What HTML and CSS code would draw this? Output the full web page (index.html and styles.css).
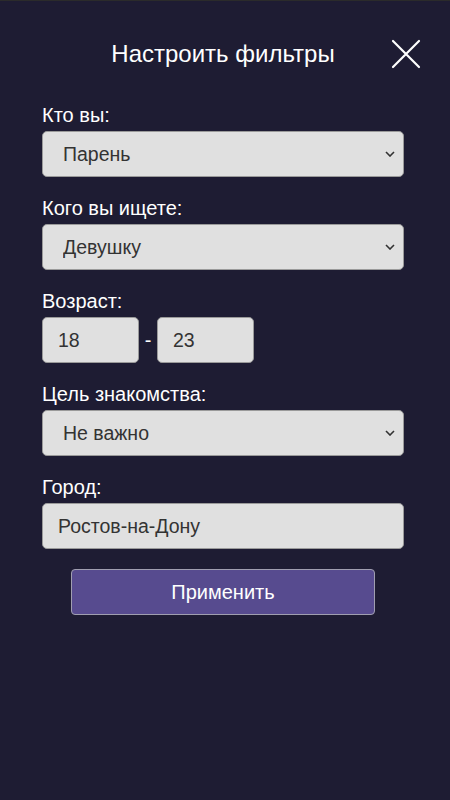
FILE: index.html
```html
<!DOCTYPE html>
<html lang="ru">
<head>
<meta charset="utf-8">
<link rel="stylesheet" href="styles.css">
</head>
<body>
<div class="modal">
  <header class="head">
    <h1 class="title">Настроить фильтры</h1>
    <button class="close" aria-label="Закрыть">
      <svg width="30" height="30" viewBox="0 0 30 30"><path d="M2 2L28 28M28 2L2 28" stroke="#fff" stroke-width="2.2" stroke-linecap="round" fill="none"/></svg>
    </button>
  </header>
  <form class="form">
    <div class="field">
      <label class="label">Кто вы:</label>
      <select class="control sel"><option>Парень</option></select>
    </div>
    <div class="field">
      <label class="label">Кого вы ищете:</label>
      <select class="control sel"><option>Девушку</option></select>
    </div>
    <div class="field">
      <label class="label">Возраст:</label>
      <div class="age">
        <input class="control small" value="18">
        <span class="dash">-</span>
        <input class="control small" value="23">
      </div>
    </div>
    <div class="field">
      <label class="label">Цель знакомства:</label>
      <select class="control sel"><option>Не важно</option></select>
    </div>
    <div class="field">
      <label class="label">Город:</label>
      <input class="control text" value="Ростов-на-Дону">
    </div>
    <button type="button" class="apply">Применить</button>
  </form>
</div>
</body>
</html>
```
FILE: styles.css
```css
html, body {
  margin: 0;
  padding: 0;
  height: 100%;
}
body {
  background: #1e1c33;
  border-top: 1px solid #2b2b2b;
  box-sizing: border-box;
  font-family: "Liberation Sans", Arial, sans-serif;
  color: #fff;
}
.modal {
  position: relative;
  padding: 0 46px 0 42px;
}
.head {
  display: flex;
  justify-content: center;
  padding-top: 39px;
  height: 66px;
  box-sizing: border-box;
}
.title {
  margin: 0;
  font-size: 24px;
  font-weight: normal;
  line-height: 28px;
}
.close {
  position: absolute;
  right: 29px;
  top: 38px;
  width: 30px;
  height: 30px;
  padding: 0;
  border: 0;
  background: none;
}
.form {
  padding-top: 37px;
  display: flex;
  flex-direction: column;
}
.field {
  display: flex;
  flex-direction: column;
  margin-bottom: 20px;
}
.label {
  font-size: 20px;
  line-height: 22px;
  margin-bottom: 5px;
}
.control {
  height: 46px;
  box-sizing: border-box;
  background-color: #e0e0e0;
  border: 1px solid #9a9a9a;
  border-radius: 5px;
  font-family: "Liberation Sans", Arial, sans-serif;
  font-size: 19.5px;
  color: #333;
  padding: 0 14px 0 16px;
  margin: 0;
  outline: none;
}
.sel {
  appearance: none;
  -webkit-appearance: none;
  padding-left: 20px;
  background-image: url("data:image/svg+xml,%3Csvg xmlns='http://www.w3.org/2000/svg' width='10' height='6' viewBox='0 0 10 6'%3E%3Cpath d='M1 1L5 5L9 1' stroke='%23333' stroke-width='1.6' fill='none'/%3E%3C/svg%3E");
  background-repeat: no-repeat;
  background-position: right 8px center;
  background-size: 10px 6px;
}
.text {
  padding-left: 15px;
}
.age {
  display: flex;
  align-items: center;
}
.small {
  width: 97px;
  padding-left: 15px;
}
.dash {
  font-size: 20px;
  width: 18px;
  text-align: center;
}
.apply {
  align-self: center;
  width: 304px;
  height: 46px;
  background: #574b8f;
  border: 1px solid #a09eb0;
  border-radius: 4px;
  color: #fff;
  font-family: "Liberation Sans", Arial, sans-serif;
  font-size: 20px;
}
```
